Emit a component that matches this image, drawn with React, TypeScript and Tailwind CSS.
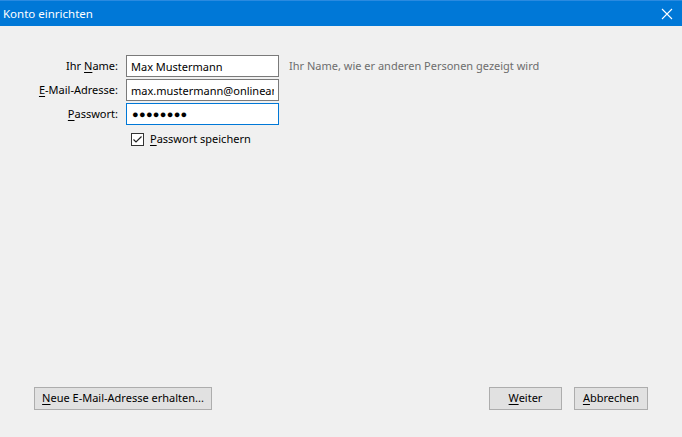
import React from "react";

const U = ({ c }: { c: string }) => <span className="underline underline-offset-2">{c}</span>;

export default function App() {
  return (
    <div className="w-[682px] h-[437px] bg-[#f0f0f0] flex flex-col text-[11px] text-black overflow-hidden whitespace-nowrap" style={{ fontFamily: '"Noto Sans", "Liberation Sans", sans-serif' }}>
      <div className="h-[26px] bg-[#0078d7] border-t border-[#2a8ae0] flex items-center justify-between pl-[3px] pr-[9px] shrink-0">
        <span className="text-white text-[11.5px]">Konto einrichten</span>
        <svg width="12" height="12" viewBox="0 0 12 12" className="mt-[1px]">
          <path d="M1 1 L11 11 M11 1 L1 11" stroke="white" strokeWidth="1.1" />
        </svg>
      </div>
      <div className="flex-1 flex flex-col pt-[29px] pb-[27px] px-[34px]">
        <div className="grid grid-cols-[84px_153px_auto] gap-x-[8px] gap-y-[2px] items-center">
          <label className="text-right">Ihr <U c="N" />ame:</label>
          <input readOnly value="Max Mustermann" className="h-[22px] w-[153px] border border-[#7a7a7a] bg-white px-[4px] outline-none text-[11px]" />
          <span className="text-[#6d6d6d] pl-[2px]">Ihr Name, wie er anderen Personen gezeigt wird</span>
          <label className="text-right"><U c="E" />-Mail-Adresse:</label>
          <input readOnly value="max.mustermann@onlineanbieter.de" className="h-[22px] w-[153px] border border-[#7a7a7a] bg-white px-[4px] outline-none text-[11px]" />
          <span />
          <label className="text-right"><U c="P" />asswort:</label>
          <div className="h-[22px] w-[153px] border border-[#0078d7] bg-white px-[5px] flex items-center text-[11px] tracking-[0.3px]">●●●●●●●●</div>
          <span />
          <span />
          <div className="flex items-center gap-[6px] pl-[5px] pt-[4px]">
            <span className="w-[13px] h-[13px] border border-[#333] bg-white flex items-center justify-center">
              <svg width="11" height="11" viewBox="0 0 11 11">
                <path d="M1.5 5.5 L4 8 L9.5 2.5" stroke="#222" strokeWidth="1.2" fill="none" />
              </svg>
            </span>
            <span><U c="P" />asswort speichern</span>
          </div>
          <span />
        </div>
        <div className="mt-auto flex items-center">
          <button className="h-[23px] w-[178px] bg-[#e1e1e1] border border-[#adadad] text-[11px]"><U c="N" />eue E-Mail-Adresse erhalten...</button>
          <div className="flex-1" />
          <button className="h-[23px] w-[73px] bg-[#e1e1e1] border border-[#adadad] text-[11px]"><U c="W" />eiter</button>
          <button className="h-[23px] w-[74px] ml-[12px] bg-[#e1e1e1] border border-[#adadad] text-[11px]"><U c="A" />bbrechen</button>
        </div>
      </div>
    </div>
  );
}
